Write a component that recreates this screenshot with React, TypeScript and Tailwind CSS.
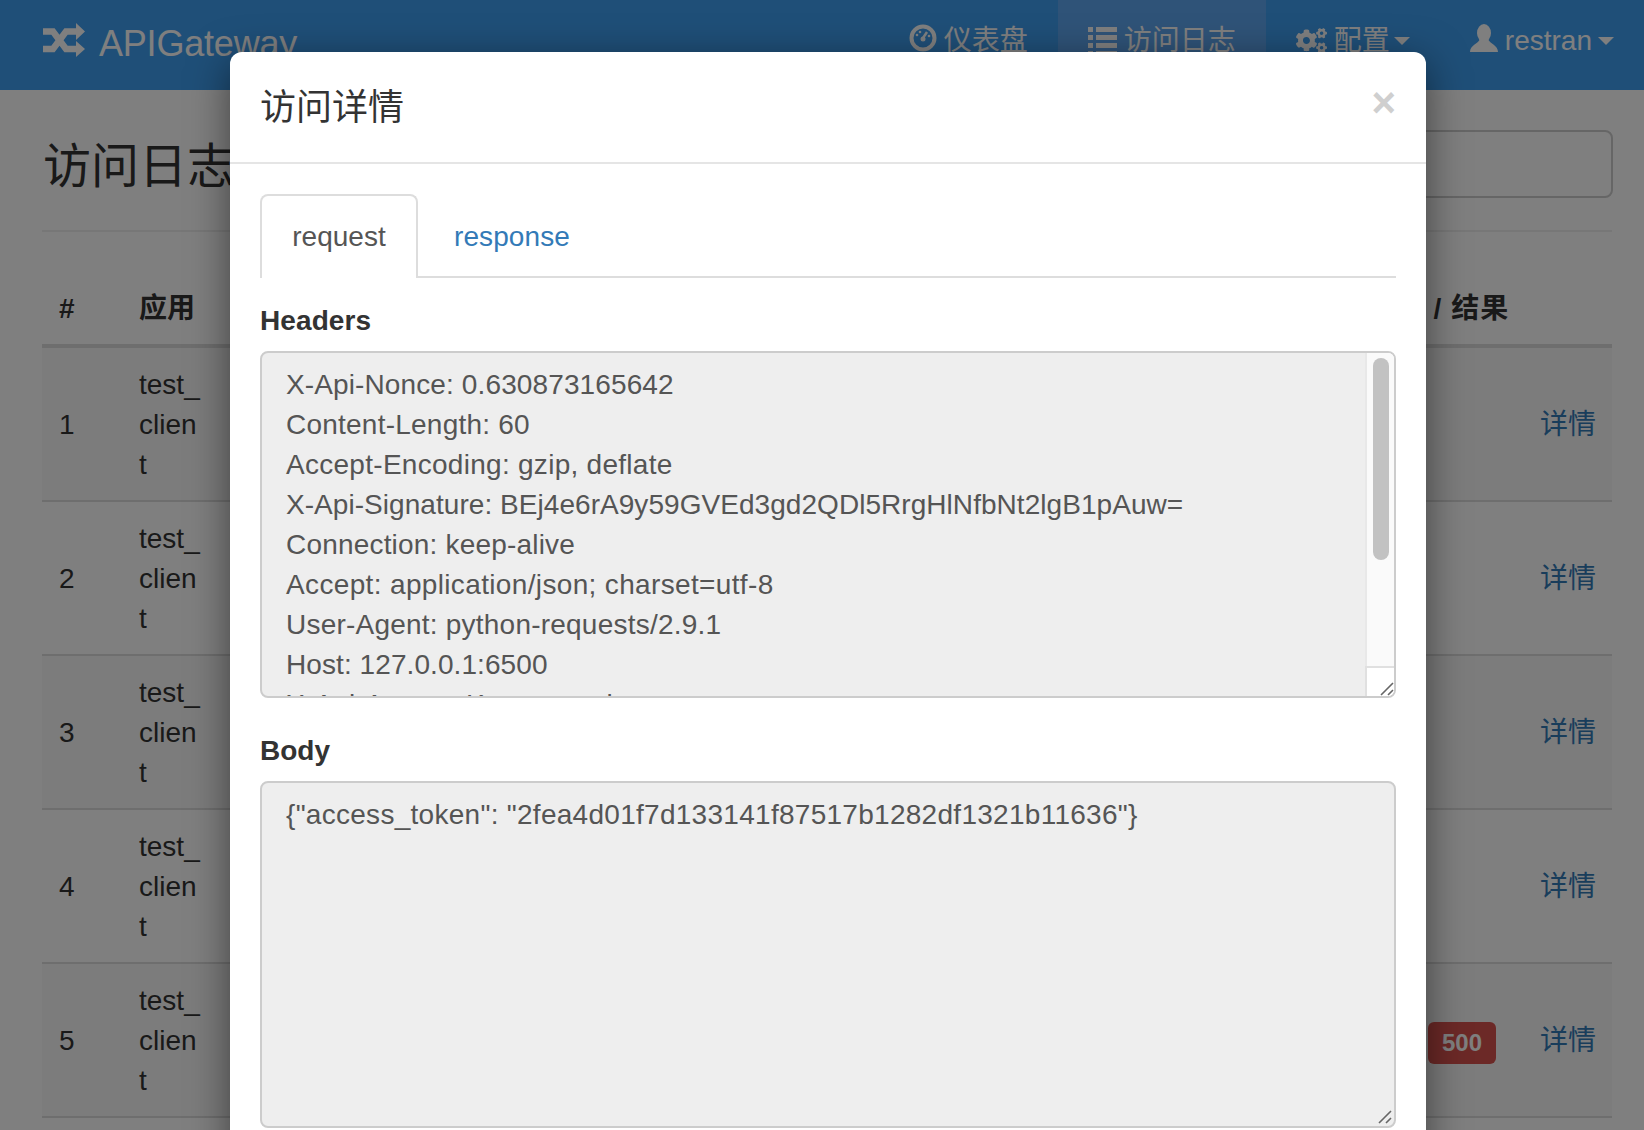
import { FaCogs } from "react-icons/fa";

const rows = [1, 2, 3, 4, 5];
const headerLines = [
  { text: "X-Api-Nonce: 0.630873165642", cls: "tracking-[0.12px]" },
  { text: "Content-Length: 60", cls: "tracking-[0.23px]" },
  { text: "Accept-Encoding: gzip, deflate", cls: "tracking-[0.28px]" },
  { text: "X-Api-Signature: BEj4e6rA9y59GVEd3gd2QDl5RrgHlNfbNt2lgB1pAuw=", cls: "tracking-[0.05px]" },
  { text: "Connection: keep-alive", cls: "tracking-[0.19px]" },
  { text: "Accept: application/json; charset=utf-8", cls: "tracking-[0.35px]" },
  { text: "User-Agent: python-requests/2.9.1", cls: "tracking-[0.22px]" },
  { text: "Host: 127.0.0.1:6500", cls: "tracking-[0.08px]" },
  { text: "X-Api-Access-Key: console", cls: "tracking-[0.2px]" },
];

function ShuffleIcon() {
  return (
    <svg width="42" height="34" viewBox="0 0 42 34" fill="none">
      <path d="M0 8.5H10L23 26H34M0 26H10L23 8.5H34" stroke="white" strokeWidth="6.5" />
      <path d="M33 0L42 8.5L33 17ZM33 18L42 26L33 34Z" fill="white" />
    </svg>
  );
}

function DashboardIcon() {
  return (
    <svg width="28" height="28" viewBox="0 0 28 28" fill="none">
      <circle cx="14" cy="14" r="11.5" stroke="white" strokeWidth="4" />
      <path d="M14 14L18 8" stroke="white" strokeWidth="2.5" />
      <circle cx="14" cy="15" r="2.5" fill="white" />
      <circle cx="8" cy="11" r="1.3" fill="white" />
      <circle cx="11" cy="8" r="1.3" fill="white" />
      <circle cx="20" cy="12" r="1.3" fill="white" />
    </svg>
  );
}

function ListIcon() {
  return (
    <svg width="29" height="30" viewBox="0 0 29 30" fill="white">
      <path d="M0 0h5v5H0zM8 0h21v5H8zM0 8h5v5H0zM8 8h21v5H8zM0 16h5v5H0zM8 16h21v5H8zM0 24h5v5H0zM8 24h21v5H8z" />
    </svg>
  );
}

function UserIcon() {
  return (
    <svg width="28" height="28" viewBox="0 0 28 28" fill="white">
      <ellipse cx="14" cy="9" rx="7" ry="9" />
      <path d="M0 28C0 21 8 20 10 15H18C20 20 28 21 28 28Z" />
    </svg>
  );
}

function Grip() {
  return (
    <svg width="14" height="14" viewBox="0 0 14 14" fill="none" stroke="#666" strokeWidth="1.6">
      <path d="M1 13L13 1M8 13L13 8" />
    </svg>
  );
}

function NavItem({ icon, label, active, caret }: { icon: React.ReactNode; label: string; active?: boolean; caret?: React.ReactNode }) {
  return (
    <div className={`flex items-start h-[90px] px-[30px] pt-[21px] gap-[7px] text-white text-[28px] leading-[40px] ${active ? "bg-[#5ea6f0]" : ""}`}>
      <span className="block h-[40px] shrink-0">{icon}</span>
      <span className="flex items-center h-[40px]">
        {label}
        {caret}
      </span>
    </div>
  );
}

export default function App() {
  return (
    <div className="relative h-[1130px] overflow-hidden bg-white text-[#333] text-[28px] leading-[40px] font-['Liberation_Sans','Noto_Sans_CJK_SC',sans-serif]">
      <header className="flex h-[90px] bg-[#3e9ef0] pl-[43px] justify-between">
        <div className="flex items-start pt-[23px] gap-[14px] text-white text-[36px] leading-[40px]">
          <ShuffleIcon />
          <span className="mt-[1px] tracking-[-0.2px]">APIGateway</span>
        </div>
        <nav className="flex">
          <NavItem icon={<span className="block mt-[3px]"><DashboardIcon /></span>} label="仪表盘" />
          <NavItem icon={<span className="block mt-[6px]"><ListIcon /></span>} label="访问日志" active />
          <NavItem
            icon={<span className="block mt-[4px]"><FaCogs size={31} color="white" /></span>}
            label="配置"
            caret={<span className="inline-block ml-[4px] border-x-[8px] border-t-[8px] border-x-transparent border-t-white" />}
          />
          <NavItem
            icon={<span className="block mt-[3px]"><UserIcon /></span>}
            label="restran"
            caret={<span className="inline-block ml-[6px] border-x-[8px] border-t-[8px] border-x-transparent border-t-white" />}
          />
        </nav>
      </header>

      <main className="pl-[42px] pr-[32px]">
        <div className="flex justify-between items-start pt-[40px] pb-[33px] border-b-2 border-[#eee] h-[142px]">
          <h1 className="text-[48px] leading-[66px] font-normal mt-[4px] ml-[1px] whitespace-nowrap">访问日志</h1>
          <div className="w-[400px] h-[68px] -mr-[1px] border-2 border-[#ccc] rounded-lg bg-white" />
        </div>
        <table className="w-full table-fixed mt-[57px] border-collapse">
          <colgroup>
            <col className="w-[81px]" />
            <col className="w-[94px]" />
            <col />
            <col className="w-[171px]" />
            <col className="w-[86px]" />
          </colgroup>
          <thead>
            <tr className="border-b-4 border-[#ddd]">
              <th className="pl-[17px] pr-[16px] pt-0 pb-[15px] text-left font-bold">#</th>
              <th className="px-[16px] pt-0 pb-[15px] text-left font-bold whitespace-nowrap">应用</th>
              <th />
              <th className="pl-[7px] pr-0 pt-0 pb-[15px] text-left font-bold whitespace-nowrap">
                状态&nbsp;&nbsp;/ <span className="ml-[2px] tracking-[1px]">结果</span>
              </th>
              <th />
            </tr>
          </thead>
          <tbody>
            {rows.map((n) => (
              <tr key={n} className={`border-b-2 border-[#ddd] ${n % 2 === 1 ? "bg-[#f9f9f9]" : ""}`}>
                <td className="pl-[17px] pr-[16px] pt-[17px] pb-[15px] align-middle">{n}</td>
                <td className="px-[16px] pt-[17px] pb-[15px] align-middle break-all">test_client</td>
                <td />
                <td className="pt-[17px] pb-[15px] align-middle pl-[73px]">
                  {n === 5 && (
                    <span className="flex items-center justify-center w-[68px] h-[42px] rounded-md bg-[#d9534f] text-white text-[24px] font-bold leading-none mt-[3px]">
                      500
                    </span>
                  )}
                </td>
                <td className="pl-[14px] pr-[16px] pt-[17px] pb-[15px] align-middle text-[#337ab7] whitespace-nowrap">详情</td>
              </tr>
            ))}
          </tbody>
        </table>
      </main>

      <div className="absolute inset-0 bg-black/50" />

      <div className="absolute left-[230px] top-[52px] w-[1196px] h-[1200px] bg-white rounded-xl shadow-[0_10px_40px_rgba(0,0,0,0.5)]">
        <div className="relative h-[112px] border-b-2 border-[#e5e5e5] px-[30px] pt-[31px]">
          <h4 className="text-[36px] leading-[50px] font-normal">访问详情</h4>
          <span className="absolute right-[30px] top-[31px] text-[42px] leading-[40px] font-bold text-[#cfcfcf]">×</span>
        </div>
        <div className="px-[30px] pt-[30px]">
          <div className="flex h-[84px] border-b-2 border-[#ddd]">
            <div className="h-[84px] w-[158px] text-center pt-[21px] border-2 border-b-0 border-[#ddd] rounded-t-lg bg-white text-[#555]">request</div>
            <div className="ml-[6px] px-[30px] pt-[23px] text-[#337ab7] tracking-[0.1px]">response</div>
          </div>
          <div className="mt-[23px] mb-[10px] font-bold tracking-[0.1px]">Headers</div>
          <div className="flex h-[347px] border-2 border-[#ccc] rounded-lg bg-[#eee] overflow-hidden text-[#555]">
            <div className="flex-1 px-[24px] py-[12px] overflow-hidden">
              {headerLines.map((l) => (
                <div key={l.text} className={`whitespace-nowrap ${l.cls}`}>{l.text}</div>
              ))}
            </div>
            <div className="flex flex-col w-[29px] bg-white">
              <div className="flex-1 bg-[#fafafa] border-l-2 border-[#e8e8e8] pl-[6px] pt-[5px]">
                <div className="w-[16px] h-[202px] rounded-full bg-[#c2c2c2]" />
              </div>
              <div className="flex items-end justify-end h-[30px] border-t-2 border-l-2 border-[#e0e0e0] bg-white">
                <Grip />
              </div>
            </div>
          </div>
          <div className="mt-[33px] mb-[10px] font-bold">Body</div>
          <div className="flex flex-col h-[347px] border-2 border-[#ccc] rounded-lg bg-[#eee] px-[24px] py-[12px] text-[#555]">
            <div className="flex-1 whitespace-nowrap tracking-[0.28px]">{'{"access_token": "2fea4d01f7d133141f87517b1282df1321b11636"}'}</div>
            <div className="flex justify-end -mr-[22px] -mb-[10px]">
              <Grip />
            </div>
          </div>
        </div>
      </div>
    </div>
  );
}
